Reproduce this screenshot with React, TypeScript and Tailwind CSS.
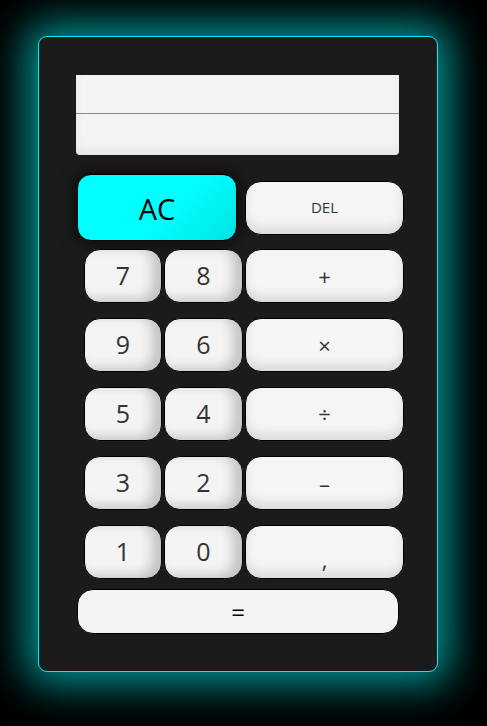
const numBtn =
  "flex h-[54px] items-center justify-center rounded-[16px] border border-black bg-[#f4f4f4] shadow-[inset_-9px_-3px_12px_rgba(0,0,0,0.2)] text-[25px] text-[#333]";
const opBtn =
  "flex h-[54px] w-[159px] items-center justify-center rounded-[16px] border border-black bg-[#f5f5f5] shadow-[inset_0_-7px_10px_rgba(0,0,0,0.1)] text-[22px] text-[#333]";

const rows: [string, string, string][] = [
  ["7", "8", "+"],
  ["9", "6", "×"],
  ["5", "4", "÷"],
  ["3", "2", "–"],
  ["1", "0", ","],
];

export default function App() {
  return (
    <div className="min-h-[726px] w-full bg-black pt-[36px] pl-[38px] font-['Open_Sans',sans-serif]">
      <div className="flex h-[636px] w-[400px] flex-col rounded-[9px] border border-[#00f0f0] bg-[#1b1b1b] pt-[38px] shadow-[0_0_40px_12px_rgba(0,210,210,0.7)]">
        <div className="ml-[37px] flex h-[80px] w-[323px] flex-col overflow-hidden rounded-b-[4px] bg-[#f4f4f4] shadow-[inset_0_-6px_8px_rgba(0,0,0,0.06)]">
          <div className="h-[39px] border-b border-[#8a8a8a]" />
          <div className="flex-1" />
        </div>

        <div className="mt-[19px] ml-[38px] flex items-center gap-[8px]">
          <button className="flex h-[67px] w-[160px] items-center justify-center rounded-[14px] border border-black bg-[linear-gradient(135deg,#00ffff_55%,#00e4e4)] pt-[2px] text-[29px] text-black shadow-[0_0_14px_4px_rgba(0,0,0,0.5)]">
            AC
          </button>
          <button className="flex h-[54px] w-[159px] items-center justify-center rounded-[16px] border border-black bg-[#f5f5f5] shadow-[inset_0_-7px_10px_rgba(0,0,0,0.1)] text-[15px] text-[#333]">
            DEL
          </button>
        </div>

        <div className="mt-[8px] ml-[45px] flex flex-col gap-[15px]">
          {rows.map(([a, b, op]) => (
            <div key={a} className="flex gap-[2px]">
              <button className={`${numBtn} w-[78px]`}>{a}</button>
              <button className={`${numBtn} w-[79px]`}>{b}</button>
              <button className={opBtn}>
                <span className={op === "," ? "mt-[14px]" : ""}>{op}</span>
              </button>
            </div>
          ))}
        </div>

        <button className="mt-[10px] ml-[38px] flex h-[45px] w-[322px] items-center justify-center rounded-[16px] border border-black bg-[#f4f4f4] text-[24px] text-black">
          =
        </button>
      </div>
    </div>
  );
}
